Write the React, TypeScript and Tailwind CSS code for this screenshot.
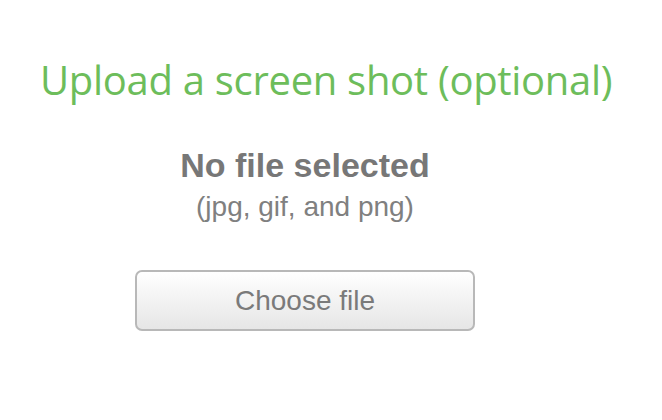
import React from 'react';

export default function App() {
    return (
        <div className="w-[662px] h-[420px] bg-white flex flex-col">
            <h1 className="mt-[54px] pl-[40px] text-[40px] leading-[52px] text-[#6dbd5b] font-['Open_Sans',sans-serif] tracking-[-0.3px]">
                Upload a screen shot (optional)
            </h1>
            <div className="ml-[135px] w-[340px] flex flex-col items-center font-['Liberation_Sans',Arial,sans-serif]">
                <p className="mt-[40px] text-[34px] leading-[38px] font-bold text-[#777777]">No file selected</p>
                <p className="mt-[7px] text-[28px] leading-[32px] text-[#808080]">(jpg, gif, and png)</p>
                <button
                    type="button"
                    className="mt-[47px] w-[340px] h-[61px] rounded-[7px] border-2 border-[#b8b8b8] bg-gradient-to-b from-white to-[#e6e6e6] text-[28px] text-[#7a7a7a]"
                >
                    Choose file
                </button>
            </div>
        </div>
    );
}
